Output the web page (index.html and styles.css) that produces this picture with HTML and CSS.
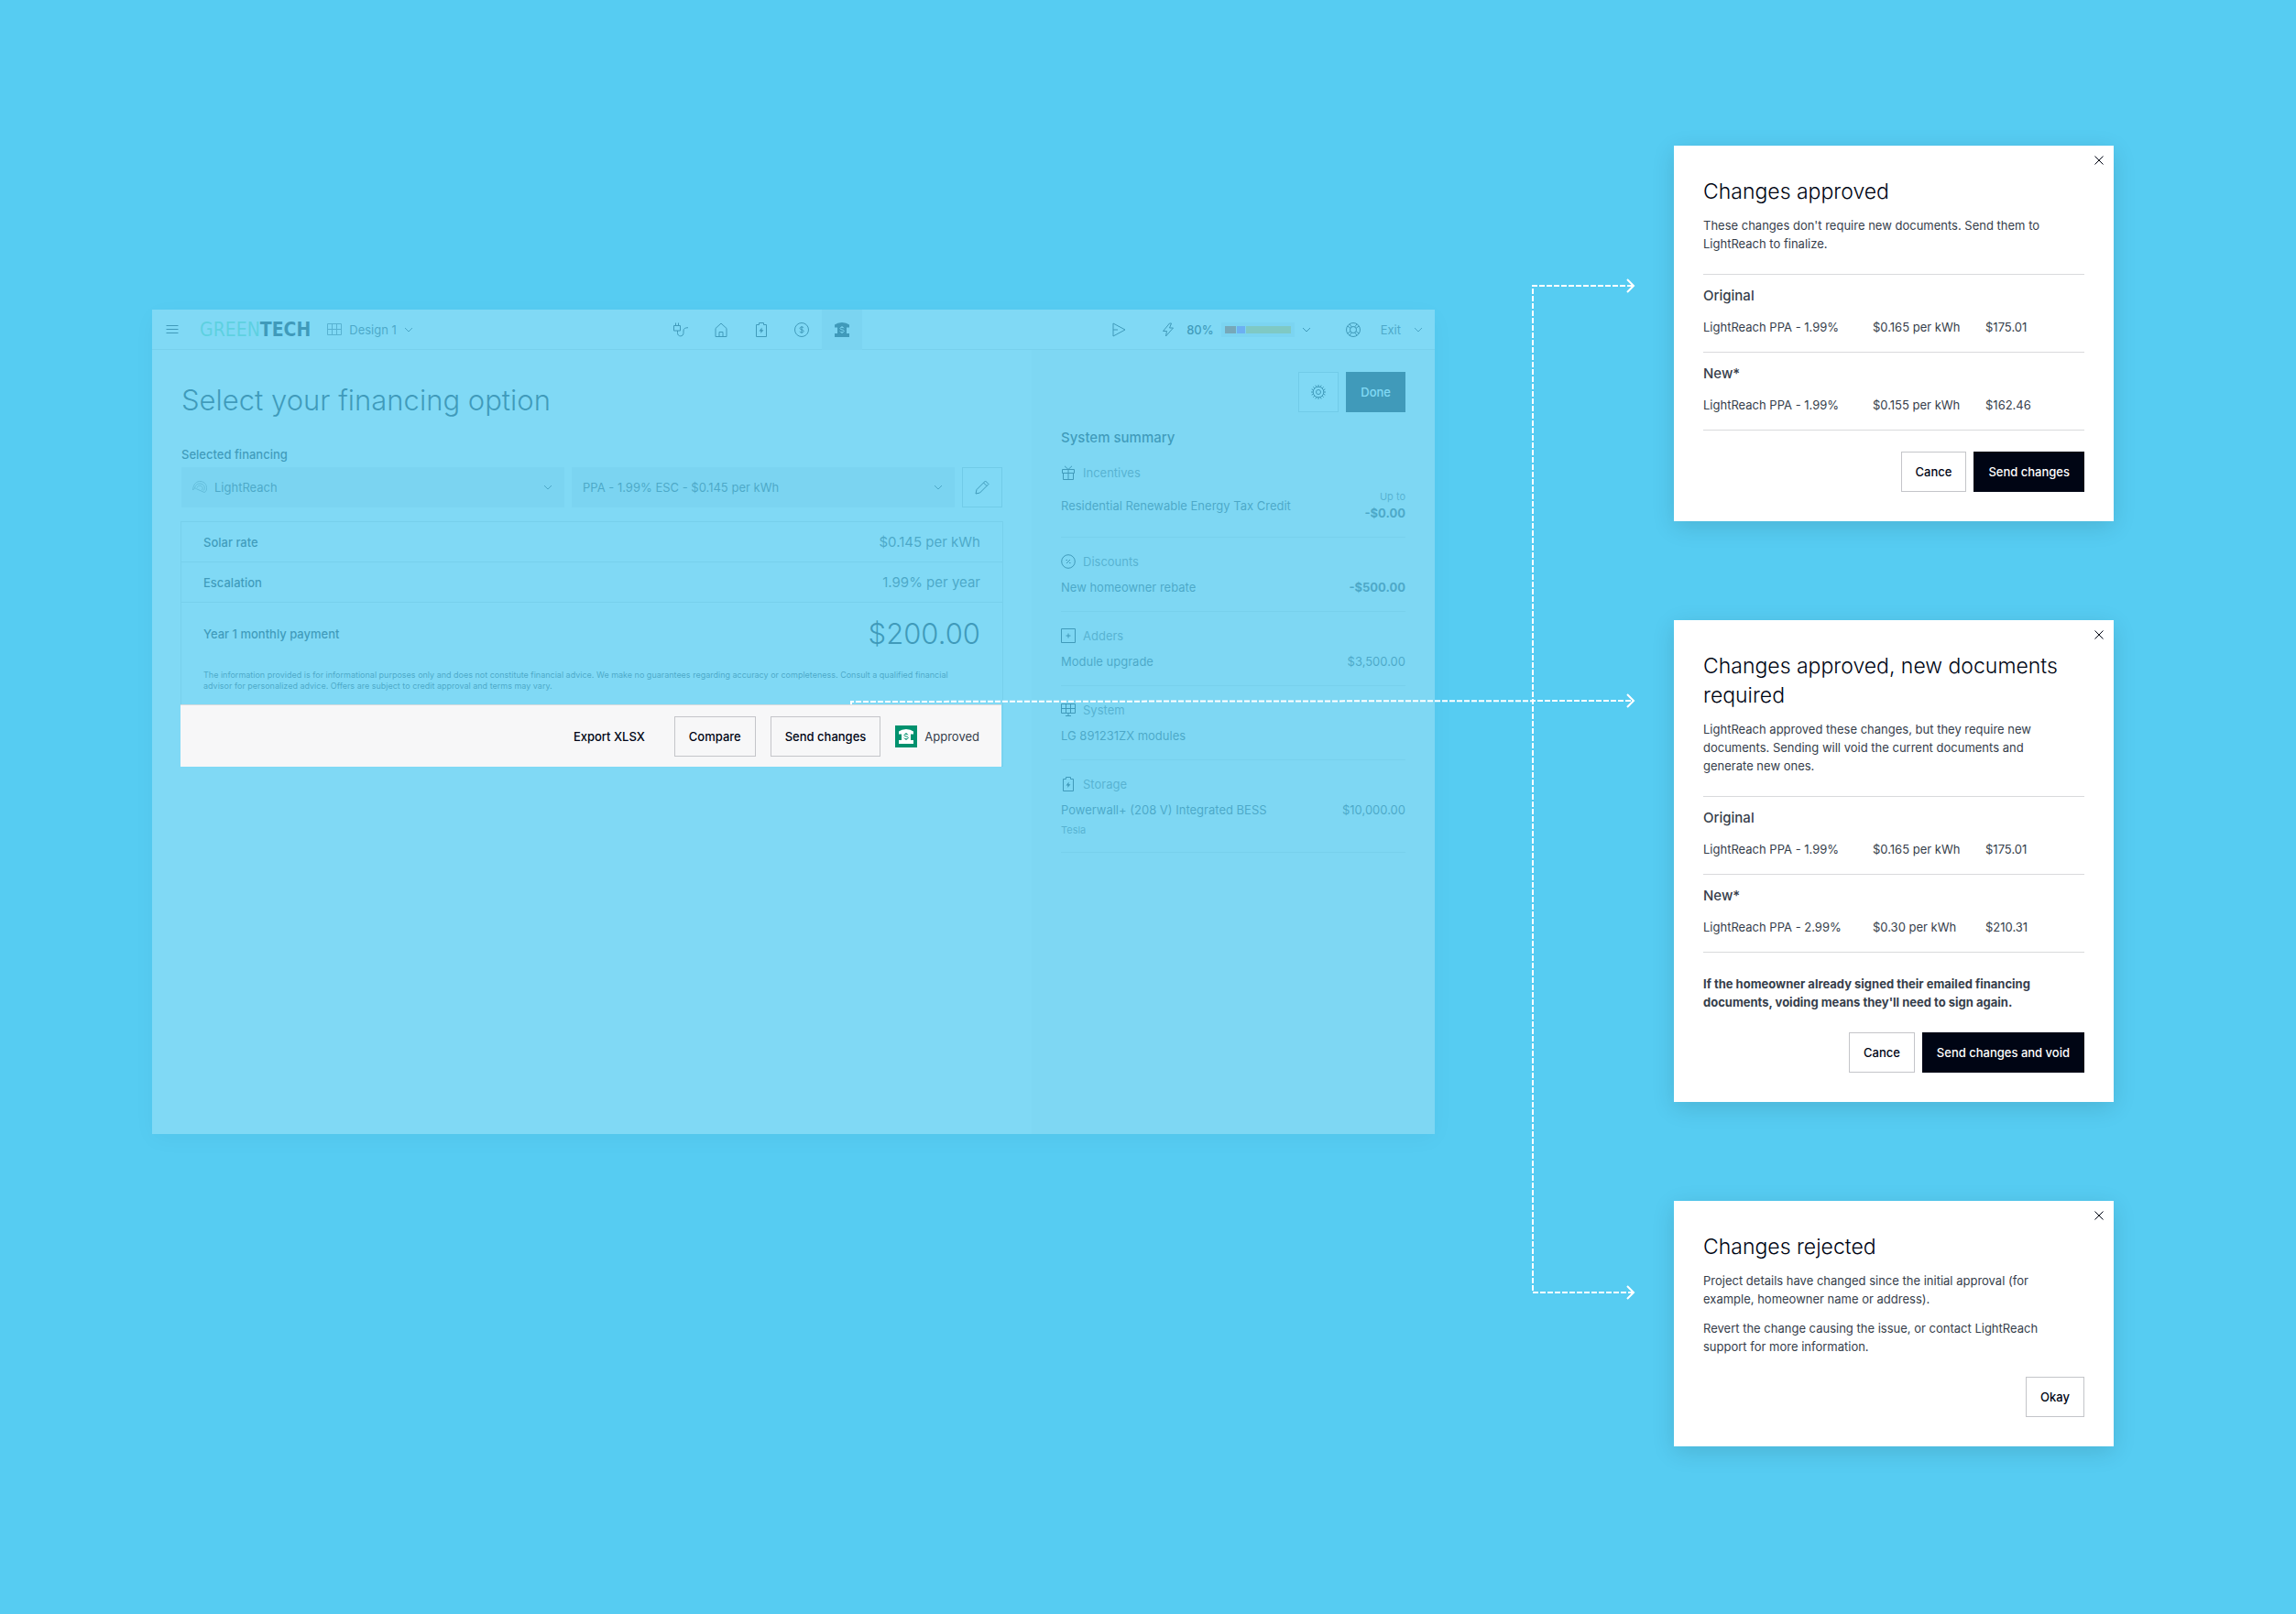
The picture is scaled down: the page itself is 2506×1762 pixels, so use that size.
FILE: index.html
```html
<!DOCTYPE html>
<html lang="en">
<head>
    <meta charset="UTF-8">
    <meta name="viewport" content="width=device-width, initial-scale=1.0">
    <title>Financing change flow</title>
    <link rel="stylesheet" href="styles.css">
</head>
<body>
    <!-- shared icons -->
    <svg class="sprite" aria-hidden="true">
        <symbol id="chevron" viewBox="0 0 10 6"><path d="M1 1l4 4 4-4"/></symbol>
        <symbol id="close" viewBox="0 0 10 10"><path d="M.5.5l9 9M9.5.5l-9 9"/></symbol>
        <symbol id="battery" viewBox="0 0 16 16"><path d="M2.5 2.500h3V.5h5v2h3v13h-11z"/><path class="solid" d="M8.600 5.500L5.500 9.500h2l-.3 2.500L10.500 8.200h-2z"/></symbol>
        <symbol id="bank" viewBox="0 0 16 16"><path class="solid" d="M0 2.500Q3 .3 8 0q5 .3 8 2.500V5.500h-3v6.500h3v4H0v-4h3V5.500H0z"/><path class="cut" d="M10.200 6.300C9.700 5.600 9 5.300 8 5.300c-1.300 0-2.100.5-2.100 1.300C5.900 8.500 10.300 7.400 10.300 9.400c0 .9-.9 1.400-2.300 1.400-1.100 0-2-.4-2.400-1.100M8 4v1.500M8 10.600V12"/></symbol>
    </svg>

    <main class="stage">
        <section class="app">
            <header class="topbar">
                <div class="topbar-left">
                    <button class="icon-btn" aria-label="Menu">
                        <svg class="icon" viewBox="0 0 16 16"><path d="M1.500 3.500h13M1.500 7.500h13M1.500 11.500h13"/></svg>
                    </button>
                    <a href="#" class="logo"><span>GREEN</span>TECH</a>
                    <button class="design-menu">
                        <svg class="icon" viewBox="0 0 16 16"><path d="M.5 1.500h15v12H.5zM5.500 1.500v12M10.500 1.500v12M.5 7.500h15"/></svg>
                        Design 1
                        <svg class="chevron"><use href="#chevron"/></svg>
                    </button>
                </div>
                <nav class="steps">
                    <a href="#" aria-label="Utility">
                        <svg class="icon" viewBox="0 0 16 16"><path d="M.5 3.500h7v5.500h-7zM2.500.5v3M5.500.5v3M4.500 9v2.500c0 4.500 6.500 4.500 6.500 0V9c0-2 1.500-3.300 5-3.300"/></svg>
                    </a>
                    <a href="#" aria-label="Home">
                        <svg class="icon" viewBox="0 0 16 16"><path d="M2 6.500L8 1l6 5.500v9H2zM6 15.500v-5h4v5"/></svg>
                    </a>
                    <a href="#" aria-label="Storage"><svg class="icon"><use href="#battery"/></svg></a>
                    <a href="#" aria-label="Pricing">
                        <svg class="icon" viewBox="0 0 16 16"><circle cx="8" cy="8" r="7.500"/><path d="M10.200 5.800C9.700 5.200 9 5 8 5c-1.200 0-2 .5-2 1.400C6 8.500 10.200 7.300 10.200 9.500c0 .9-.9 1.500-2.200 1.500-1 0-1.900-.3-2.300-1M8 4v8"/></svg>
                    </a>
                    <a href="#" class="active" aria-label="Financing"><svg class="icon"><use href="#bank"/></svg></a>
                </nav>
                <div class="topbar-right">
                    <button class="icon-btn" aria-label="Send">
                        <svg class="icon" viewBox="0 0 16 16"><path d="M2 1l13 7-13 7zM2 8h5"/></svg>
                    </button>
                    <button class="usage">
                        <svg class="icon" viewBox="0 0 16 16"><path d="M9.500 1L2.500 9.500h4l-1 5.500 8-9h-4l2-5z"/></svg>
                        <span>80%</span>
                        <span class="meter"><i class="seg orange"></i><i class="seg purple"></i><i class="seg yellow"></i></span>
                        <svg class="chevron"><use href="#chevron"/></svg>
                    </button>
                    <button class="icon-btn" aria-label="Help">
                        <svg class="icon" viewBox="0 0 16 16"><circle cx="8" cy="8" r="7.500"/><circle cx="8" cy="8" r="3.500"/><path d="M2 4l3 2.500M4 2l2.500 3M14 4l-3 2.500M12 2L9.500 5M2 12l3-2.500M4 14l2.500-3M14 12l-3-2.500M12 14l-2.500-3"/></svg>
                    </button>
                    <button class="exit">
                        Exit
                        <svg class="chevron"><use href="#chevron"/></svg>
                    </button>
                </div>
            </header>

            <div class="app-body">
                <div class="content">
                    <h1>Select your financing option</h1>
                    <label class="field-label" for="provider">Selected financing</label>
                    <div class="selectors">
                        <div class="select with-logo">
                            <svg class="icon" viewBox="0 0 16 16"><path d="M.5 11C1 4 5 1 9 1.500c4.500.5 7 4 6.500 8.500-.2 1.500-1 3-2.500 3.500M.5 11c2-2.500 3-2 4.500-1l8 3.500M2.500 9C3 5.500 6 3.500 9 4c3 .5 4.800 3 4.300 5.500-.2 1-.8 2-1.800 2.500M5 8.500C5.500 6.800 7 6 8.600 6.300c1.600.3 2.800 1.700 2.500 3.200-.1.800-.6 1.400-1.300 1.700"/></svg>
                            <select id="provider"><option>LightReach</option></select>
                            <svg class="chevron"><use href="#chevron"/></svg>
                        </div>
                        <div class="select">
                            <select aria-label="Product"><option>PPA - 1.99% ESC - $0.145 per kWh</option></select>
                            <svg class="chevron"><use href="#chevron"/></svg>
                        </div>
                        <button class="btn btn-icon" aria-label="Edit">
                            <svg class="icon" viewBox="0 0 16 16"><path d="M1 15l1-4.500L11.500 1 15 4.500 5.500 14zM9.500 3l3.500 3.500"/></svg>
                        </button>
                    </div>

                    <div class="quote">
                        <dl>
                            <div class="quote-row"><dt>Solar rate</dt><dd>$0.145 per kWh</dd></div>
                            <div class="quote-row"><dt>Escalation</dt><dd>1.99% per year</dd></div>
                            <div class="quote-row total"><dt>Year 1 monthly payment</dt><dd>$200.00</dd></div>
                        </dl>
                        <p class="fine-print">The information provided is for informational purposes only and does not constitute financial advice. We make no guarantees regarding accuracy or completeness. Consult a qualified financial advisor for personalized advice. Offers are subject to credit approval and terms may vary.</p>
                        <div class="quote-actions">
                            <button class="btn btn-plain">Export XLSX</button>
                            <button class="btn">Compare</button>
                            <button class="btn">Send changes</button>
                            <span class="status">
                                <span class="status-badge"><svg class="icon"><use href="#bank"/></svg></span>
                                Approved
                            </span>
                        </div>
                    </div>
                </div>

                <aside class="summary">
                    <div class="summary-actions">
                        <button class="btn btn-icon" aria-label="Settings">
                            <svg class="icon" viewBox="0 0 16 16"><circle cx="8" cy="8" r="5.800"/><circle cx="8" cy="8" r="2.500"/><path d="M8 0v2M8 14v2M0 8h2M14 8h2M2.300 2.300l1.500 1.500M12.200 12.200l1.500 1.500M2.300 13.700l1.500-1.500M12.200 3.800l1.500-1.500M4.900.6l.8 1.900M10.300 13.500l.8 1.900M.6 11.100l1.900-.8M13.500 5.700l1.900-.8M.6 4.900l1.900.8M13.500 10.300l1.900.8M4.900 15.400l.8-1.900M10.300 2.500l.8-1.900"/></svg>
                        </button>
                        <button class="btn btn-dark">Done</button>
                    </div>
                    <h2>System summary</h2>
                    <section class="group">
                        <h3>
                            <svg class="icon" viewBox="0 0 16 16"><path d="M1.500 4.500h13v4h-13zM2.500 8.500v7h11v-7M8 4.500v11M8 4.500L4 .8M8 4.500L12 .8"/></svg>
                            Incentives
                        </h3>
                        <div class="line">
                            <span>Residential Renewable Energy Tax Credit</span>
                            <span class="amount"><small>Up to</small><b>-$0.00</b></span>
                        </div>
                    </section>
                    <section class="group">
                        <h3>
                            <svg class="icon" viewBox="0 0 16 16"><circle cx="8" cy="8" r="7.300"/><path d="M10 6l-4 4M5.500 6.500h1.500M9 9.500h1.500"/></svg>
                            Discounts
                        </h3>
                        <div class="line"><span>New homeowner rebate</span><b>-$500.00</b></div>
                    </section>
                    <section class="group">
                        <h3>
                            <svg class="icon" viewBox="0 0 16 16"><path d="M.5.5h15v15H.5zM8 5.500v5M5.500 8h5"/></svg>
                            Adders
                        </h3>
                        <div class="line"><span>Module upgrade</span><span>$3,500.00</span></div>
                    </section>
                    <section class="group">
                        <h3>
                            <svg class="icon" viewBox="0 0 16 16"><path d="M.5 1.500h15v10H.5zM5.500 1.500v10M10.500 1.500v10M.5 6.500h15M8 11.500v3M5 14.500h6"/></svg>
                            System
                        </h3>
                        <div class="line"><span>LG 891231ZX modules</span></div>
                    </section>
                    <section class="group">
                        <h3>
                            <svg class="icon"><use href="#battery"/></svg>
                            Storage
                        </h3>
                        <div class="line"><span>Powerwall+ (208 V) Integrated BESS</span><span>$10,000.00</span></div>
                        <p class="note">Tesla</p>
                    </section>
                </aside>
            </div>
        </section>

        <!-- dashed arrows from "Send changes" to each dialog -->
        <div class="connectors">
            <svg viewBox="0 0 261 1600" width="261" height="1600" aria-hidden="true">
                <path class="dash" d="M-637 769V766L216 765"/>
                <path class="dash" d="M216 312H107V1411H216"/>
                <path d="M210 305l7 7-7 7M210 758l7 7-7 7M210 1404l7 7-7 7"/>
            </svg>
        </div>

        <div class="dialogs">
            <section class="dialog" role="dialog" aria-labelledby="approved-title">
                <button class="dialog-close" aria-label="Close"><svg><use href="#close"/></svg></button>
                <h2 id="approved-title">Changes approved</h2>
                <p>These changes don't require new documents. Send them to LightReach to finalize.</p>
                <table class="compare">
                    <tbody>
                        <tr><th colspan="3" scope="rowgroup">Original</th></tr>
                        <tr><td>LightReach PPA - 1.99%</td><td>$0.165 per kWh</td><td>$175.01</td></tr>
                    </tbody>
                    <tbody>
                        <tr><th colspan="3" scope="rowgroup">New*</th></tr>
                        <tr><td>LightReach PPA - 1.99%</td><td>$0.155 per kWh</td><td>$162.46</td></tr>
                    </tbody>
                </table>
                <div class="dialog-actions">
                    <button class="btn">Cance</button>
                    <button class="btn btn-dark">Send changes</button>
                </div>
            </section>

            <section class="dialog" role="dialog" aria-labelledby="documents-title">
                <button class="dialog-close" aria-label="Close"><svg><use href="#close"/></svg></button>
                <h2 id="documents-title">Changes approved, new documents required</h2>
                <p>LightReach approved these changes, but they require new documents. Sending will void the current documents and generate new ones.</p>
                <table class="compare">
                    <tbody>
                        <tr><th colspan="3" scope="rowgroup">Original</th></tr>
                        <tr><td>LightReach PPA - 1.99%</td><td>$0.165 per kWh</td><td>$175.01</td></tr>
                    </tbody>
                    <tbody>
                        <tr><th colspan="3" scope="rowgroup">New*</th></tr>
                        <tr><td>LightReach PPA - 2.99%</td><td>$0.30 per kWh</td><td>$210.31</td></tr>
                    </tbody>
                </table>
                <p class="warning">If the homeowner already signed their emailed financing documents, voiding means they'll need to sign again.</p>
                <div class="dialog-actions">
                    <button class="btn">Cance</button>
                    <button class="btn btn-dark">Send changes and void</button>
                </div>
            </section>

            <section class="dialog" role="dialog" aria-labelledby="rejected-title">
                <button class="dialog-close" aria-label="Close"><svg><use href="#close"/></svg></button>
                <h2 id="rejected-title">Changes rejected</h2>
                <p>Project details have changed since the initial approval (for example, homeowner name or address).</p>
                <p>Revert the change causing the issue, or contact LightReach support for more information.</p>
                <div class="dialog-actions">
                    <button class="btn">Okay</button>
                </div>
            </section>
        </div>
    </main>
</body>
</html>
```
FILE: styles.css
```css
* {
    box-sizing: border-box;
}

body {
    margin: 0;
    background: #56ccf2;
    color: #363e4b;
    font-family: Inter, "Liberation Sans", sans-serif;
    font-size: 13px;
    line-height: 20px;
}

h1, h2, h3, p, dl, dd {
    margin: 0;
}

button {
    padding: 0;
    border: 0;
    background: none;
    color: inherit;
    font: inherit;
    cursor: pointer;
}

svg {
    display: block;
    flex: none;
    fill: none;
    stroke: currentColor;
}

.sprite {
    position: absolute;
    width: 0;
    height: 0;
}

.icon {
    width: 16px;
    height: 16px;
    color: #000514;
}

.solid {
    fill: currentColor;
    stroke: none;
}

.cut {
    stroke: var(--cut, #fff);
}

.chevron {
    width: 10px;
    height: 6px;
}

.stage {
    display: flex;
    align-items: flex-start;
    min-height: 100vh;
    padding: 0 199px 0 166px;
}

/* buttons */

.btn {
    height: 44px;
    padding: 0 15px;
    border: 1px solid #c4c5c9;
    background: #fff;
    color: #000514;
    font-weight: 500;
    white-space: nowrap;
}

.btn-dark {
    border-color: #000514;
    background: #000514;
    color: #fff;
}

.btn-plain {
    border-color: transparent;
    background: none;
}

.btn-icon {
    display: grid;
    place-items: center;
    width: 44px;
    padding: 0;
}

/* app window, dimmed by an overlay */

.app {
    position: relative;
    flex: 1;
    min-width: 0;
    min-height: 900px;
    margin-top: 338px;
    display: flex;
    flex-direction: column;
    background: #fff;
    box-shadow: 0 6px 24px rgba(0, 0, 0, 0.03);
}

.app::after {
    content: "";
    position: absolute;
    inset: 0;
    background: rgba(86, 204, 242, 0.75);
    pointer-events: none;
}

.topbar {
    display: grid;
    grid-template-columns: 8fr auto 9fr;
    height: 44px;
    border-bottom: 1px solid #d9dadc;
}

.topbar-left,
.topbar-right,
.steps {
    display: flex;
    align-items: center;
}

.topbar-right {
    justify-content: flex-end;
}

.icon-btn,
.steps a {
    display: grid;
    place-items: center;
    width: 44px;
    height: 44px;
}

.steps .active {
    --cut: #ececed;
    background: #ececed;
}

.logo {
    margin: 0 18px 0 8px;
    color: #000514;
    font-family: "Liberation Sans Narrow", "DejaVu Sans Condensed", sans-serif;
    font-size: 21px;
    font-weight: 700;
    text-decoration: none;
}

.logo span {
    color: #79dcab;
    font-weight: 400;
}

.design-menu,
.usage,
.exit {
    display: flex;
    align-items: center;
    gap: 8px;
}

.design-menu .icon {
    color: #5f6670;
}

.usage {
    margin: 0 24px;
    color: #000514;
    font-weight: 500;
}

.usage .icon {
    margin-right: 4px;
}

.exit {
    gap: 14px;
    margin: 0 13px 0 8px;
}

.meter {
    display: flex;
    gap: 1px;
    width: 80px;
    height: 16px;
    padding: 4px;
    background: #ececed;
}

.orange {
    width: 12px;
    background: #d63c10;
}

.purple {
    width: 9px;
    background: #ae5cf2;
}

.yellow {
    flex: 1;
    background: #fcc03e;
}

.app-body {
    display: flex;
    flex: 1;
}

.content {
    flex: 1;
    padding: 32px;
}

h1 {
    margin-bottom: 26px;
    color: #000514;
    font-size: 31px;
    font-weight: 300;
    line-height: 46px;
}

.field-label {
    display: block;
    margin-bottom: 4px;
    color: #000514;
    font-weight: 500;
}

.selectors {
    display: flex;
    gap: 8px;
}

.select {
    position: relative;
    flex: 1;
}

.select select {
    width: 100%;
    height: 44px;
    padding: 0 32px 0 12px;
    border: 0;
    border-radius: 0;
    appearance: none;
    background: #ececed;
    color: #363e4b;
    font: inherit;
}

.with-logo select {
    padding-left: 36px;
}

.select .icon {
    position: absolute;
    top: 14px;
    left: 12px;
    color: #8a8f98;
}

.select .chevron {
    position: absolute;
    top: 19px;
    right: 13px;
}

.quote {
    margin: 15px -1px 0;
    border: 1px solid #d9dadc;
}

.quote-row {
    display: flex;
    align-items: center;
    justify-content: space-between;
    height: 44px;
    padding: 0 24px;
    border-bottom: 1px solid #d9dadc;
}

.quote-row dt {
    color: #000514;
    font-weight: 500;
}

.quote-row dd {
    font-size: 15px;
}

.quote-row.total {
    height: 68px;
    border-bottom: 0;
}

.quote-row.total dd {
    color: #000514;
    font-size: 31px;
    font-weight: 300;
}

.fine-print {
    padding: 5px 48px 14px 24px;
    font-size: 9px;
    line-height: 12px;
}

.quote-actions {
    position: relative;
    z-index: 1;
    display: flex;
    align-items: center;
    justify-content: flex-end;
    gap: 16px;
    min-height: 68px;
    margin: 0 1px -1px -1px;
    padding: 0 24px;
    border-top: 1px solid #d9dadc;
    background: #f7f7f8;
}

.quote-actions .btn {
    background: none;
}

.status {
    display: flex;
    align-items: center;
    gap: 8px;
}

.status-badge {
    --cut: #00916e;
    display: grid;
    place-items: center;
    width: 24px;
    height: 24px;
    background: #00916e;
}

.status-badge .icon {
    color: #fff;
}

/* right column */

.summary {
    width: 440px;
    padding: 24px 32px;
    background: #f7f7f8;
}

.summary-actions {
    display: flex;
    justify-content: flex-end;
    gap: 8px;
    margin-bottom: 16px;
}

.summary h2 {
    color: #000514;
    font-size: 15px;
    font-weight: 500;
    line-height: 24px;
}

.group {
    padding: 16px 0;
    border-bottom: 1px solid #d9dadc;
}

.group h3 {
    display: flex;
    align-items: center;
    gap: 8px;
    margin-bottom: 8px;
    color: #5f6670;
    font-size: 13px;
    font-weight: 400;
}

.line {
    display: flex;
    align-items: center;
    justify-content: space-between;
}

.amount {
    display: flex;
    flex-direction: column;
    text-align: right;
}

.amount small,
.note {
    color: #5f6670;
    font-size: 11px;
    line-height: 16px;
}

.note {
    margin-top: 4px;
}

/* arrows */

.connectors {
    position: relative;
    flex: none;
    width: 261px;
    pointer-events: none;
}

.connectors svg {
    position: absolute;
    top: 0;
    left: 0;
    z-index: 2;
    overflow: visible;
    stroke: #fff;
    stroke-width: 2;
}

.dash {
    stroke-dasharray: 6 2;
}

/* dialogs */

.dialogs {
    display: flex;
    flex: none;
    flex-direction: column;
    gap: 108px;
    width: 480px;
    padding: 159px 0;
}

.dialog {
    position: relative;
    padding: 34px 32px 32px;
    background: #fff;
    box-shadow: 0 6px 24px rgba(0, 0, 0, 0.12);
}

.dialog h2 {
    color: #000514;
    font-size: 23px;
    font-weight: 300;
    line-height: 32px;
}

.dialog p {
    margin-top: 12px;
    padding-right: 12px;
}

.dialog h2 + p {
    margin-top: 11px;
}

.dialog-close {
    position: absolute;
    top: 0;
    right: 0;
    display: grid;
    place-items: center;
    width: 32px;
    height: 32px;
    color: #000514;
}

.dialog-close svg {
    width: 10px;
    height: 10px;
}

.compare {
    width: 100%;
    margin-top: 23px;
    border-spacing: 0;
    border-bottom: 1px solid #d9dadc;
}

.compare th {
    padding: 11px 0 12px;
    border-top: 1px solid #d9dadc;
    font-size: 15px;
    font-weight: 500;
    line-height: 24px;
    text-align: left;
}

.compare td {
    padding: 0 0 17px;
    white-space: nowrap;
}

.compare td:nth-child(1) {
    width: 185px;
}

.compare td:nth-child(2) {
    width: 123px;
}

.dialog-actions {
    display: flex;
    justify-content: flex-end;
    gap: 8px;
    margin-top: 23px;
}

.dialog .warning {
    margin-top: 24px;
    font-weight: 700;
}
```
